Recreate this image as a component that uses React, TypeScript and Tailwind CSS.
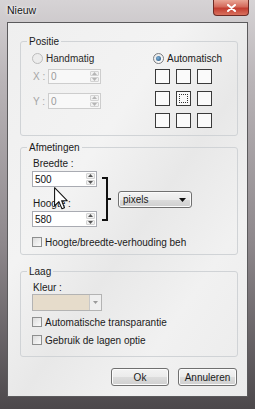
import React from "react";

const Arrow = ({ up, color = "#4d4d4d" }: { up?: boolean; color?: string }) => (
  <svg width="5" height="3" viewBox="0 0 5 3">
    <path d={up ? "M0 3 L2.5 0 L5 3 Z" : "M0 0 L2.5 3 L5 0 Z"} fill={color} />
  </svg>
);

const Spin = ({ value, disabled, w, h }: { value: string; disabled?: boolean; w: string; h: string }) => (
  <div
    className={`flex ${w} ${h} border ${
      disabled ? "border-[#cdcdcd] bg-[#f8f8f8] text-[#9b9b9b]" : "border-[#a9abb2] bg-white text-[#111]"
    }`}
  >
    <div className="flex flex-1 items-center pl-[2px]">{value}</div>
    <div className="flex w-[11px] flex-col gap-[1px] p-[1px]">
      <div className="flex flex-1 items-center justify-center rounded-[1px] border border-[#d3d3d3] bg-[#f1f1f1]">
        <Arrow up color={disabled ? "#b5b5b5" : "#555"} />
      </div>
      <div className="flex flex-1 items-center justify-center rounded-[1px] border border-[#d3d3d3] bg-[#f1f1f1]">
        <Arrow color={disabled ? "#b5b5b5" : "#555"} />
      </div>
    </div>
  </div>
);

const Radio = ({ checked, disabled, label }: { checked?: boolean; disabled?: boolean; label: string }) => (
  <div className="flex h-[11px] items-center gap-[3px]">
    <div
      className={`flex h-[11px] w-[11px] items-center justify-center rounded-full border ${
        disabled ? "border-[#bcbcbc] bg-[#ececec]" : "border-[#7b7d80] bg-[linear-gradient(135deg,#e6e6e6,#ffffff)]"
      }`}
    >
      {checked && (
        <div className="h-[5px] w-[5px] rounded-full bg-[radial-gradient(circle_at_40%_40%,#7fb3dc,#1e4b73)]" />
      )}
    </div>
    <span className={disabled ? "text-[#2a2a2a]" : "text-[#1a1a1a]"}>{label}</span>
  </div>
);

const Check = ({ label }: { label: string }) => (
  <div className="flex h-[10px] items-center gap-[3px] whitespace-nowrap">
    <div className="h-[10px] w-[10px] shrink-0 border border-[#8e8f8f] bg-[linear-gradient(135deg,#dcdcdc,#fbfbfb)]" />
    <span>{label}</span>
  </div>
);

const Group = ({ title, className, children }: { title: string; className: string; children: React.ReactNode }) => (
  <fieldset className={`rounded-[3px] border border-[#d0d3d6] ${className}`}>
    <legend className="ml-[6px] px-[2px] leading-[13px] text-[#1a1a1a]">{title}</legend>
    {children}
  </fieldset>
);

export default function App() {
  return (
    <div className="relative flex h-[409px] w-[255px] flex-col overflow-hidden bg-[linear-gradient(180deg,#d6d3d5_0%,#b9b4b7_20%,#8d878b_60%,#4c484b_100%)] font-['Liberation_Sans',Arial,sans-serif] text-[10px] text-[#1a1a1a]">
      {/* title bar */}
      <div className="flex h-[22px] shrink-0 items-start">
        <span className="pl-[7px] pt-[4px] text-[10.5px] leading-[13px] text-[#151515] [text-shadow:0_0_4px_#fff,0_0_2px_#fff]">
          Nieuw
        </span>
        <div className="ml-auto mr-[6px] flex h-[16px] w-[36px] items-center justify-center rounded-b-[4px] border border-t-0 border-[#6e2b25] bg-[linear-gradient(180deg,#e9a595_0%,#d46a5b_45%,#c23d30_55%,#d9705d_100%)]">
          <svg width="9" height="8" viewBox="0 0 9 8">
            <path d="M1 1 L8 7 M8 1 L1 7" stroke="#fff" strokeWidth="2" strokeLinecap="round" />
          </svg>
        </div>
      </div>

      {/* client area */}
      <div className="mx-[7px] mb-[12px] flex flex-1 flex-col border border-[#5b5a5c] bg-[linear-gradient(125deg,#efefef_0%,#f3f3f3_35%,#e8e8e8_55%,#f1f1f1_75%,#ebebeb_100%)] pl-[12px] pr-[9px]">
        <Group title="Positie" className="mt-[12px] pb-[7px]">
          <div className="flex pl-[11px] pt-[5px]">
            <div className="flex w-[121px] flex-col">
              <Radio disabled label="Handmatig" />
              <div className="mt-[5px] flex items-center">
                <span className="w-[16px] pl-[1px] text-[#a5a5a5]">X :</span>
                <Spin value="0" disabled w="w-[53px]" h="h-[15px]" />
              </div>
              <div className="mt-[9px] flex items-center">
                <span className="w-[16px] pl-[1px] text-[#a5a5a5]">Y :</span>
                <Spin value="0" disabled w="w-[53px]" h="h-[16px]" />
              </div>
            </div>
            <div className="flex flex-col">
              <Radio checked label="Automatisch" />
              <div className="ml-[2px] mt-[5px] grid w-fit grid-cols-3 gap-x-[6px] gap-y-[7px]">
                {Array.from({ length: 9 }).map((_, i) => (
                  <div
                    key={i}
                    className="flex h-[15px] w-[15px] items-center justify-center border-[1.5px] border-[#3a3a3a] bg-[#fafafa]"
                  >
                    {i === 4 && <div className="h-[9px] w-[9px] border border-dotted border-[#333]" />}
                  </div>
                ))}
              </div>
            </div>
          </div>
        </Group>

        <Group title="Afmetingen" className="mt-[5px] pb-[7px]">
          <div className="flex items-start pl-[11px] pt-[3px]">
            <div className="flex w-[65px] flex-col">
              <span className="pl-[1px] leading-[13px]">Breedte :</span>
              <div className="mt-[1px]">
                <Spin value="500" w="w-[65px]" h="h-[16px]" />
              </div>
              <span className="mt-[10px] pl-[1px] leading-[13px]">Hoogte :</span>
              <div className="mt-[1px]">
                <Spin value="580" w="w-[65px]" h="h-[16px]" />
              </div>
            </div>
            <svg className="ml-[5px] mt-[20px]" width="9" height="44" viewBox="0 0 9 44">
              <path d="M0 1 H5 V43 H0 M5 22 H9" fill="none" stroke="#111" strokeWidth="2" />
            </svg>
            <div className="ml-[7px] mt-[34px] flex h-[17px] w-[74px] items-center justify-between rounded-[3px] border border-[#707070] bg-[linear-gradient(180deg,#f3f3f3_0%,#ebebeb_50%,#dcdcdc_50%,#cfcfcf_100%)] pl-[4px] pr-[5px] shadow-[inset_0_0_0_1px_#fbfbfb]">
              <span>pixels</span>
              <svg width="7" height="4" viewBox="0 0 7 4">
                <path d="M0 0 H7 L3.5 4 Z" fill="#111" />
              </svg>
            </div>
          </div>
          <div className="mt-[10px] pl-[11px]">
            <Check label="Hoogte/breedte-verhouding beh" />
          </div>
        </Group>

        <Group title="Laag" className="mt-[10px] pb-[11px]">
          <div className="flex flex-col pl-[11px] pt-[3px]">
            <span className="pl-[1px] leading-[13px]">Kleur :</span>
            <div className="flex h-[17px] w-[70px] border border-[#b3b3b3] bg-[#e6dccb]">
              <div className="flex-1" />
              <div className="flex w-[12px] items-center justify-center border-l border-[#c8c8c8] bg-[#efefef]">
                <Arrow color="#9a9a9a" />
              </div>
            </div>
            <div className="mt-[6px]">
              <Check label="Automatische transparantie" />
            </div>
            <div className="mt-[8px]">
              <Check label="Gebruik de lagen optie" />
            </div>
          </div>
        </Group>

        <div className="mt-[11px] flex justify-end gap-[9px] pr-[1px]">
          <button className="flex h-[18px] w-[58px] items-center justify-center rounded-[3px] border border-[#707070] bg-[linear-gradient(180deg,#f3f3f3_0%,#ebebeb_50%,#dddddd_50%,#cfcfcf_100%)] shadow-[inset_0_0_0_1px_#fcfcfc]">
            Ok
          </button>
          <button className="flex h-[18px] w-[59px] items-center justify-center rounded-[3px] border border-[#707070] bg-[linear-gradient(180deg,#f3f3f3_0%,#ebebeb_50%,#dddddd_50%,#cfcfcf_100%)] shadow-[inset_0_0_0_1px_#fcfcfc]">
            Annuleren
          </button>
        </div>
      </div>

      {/* mouse pointer */}
      <svg className="absolute left-[54px] top-[187px]" width="14" height="23" viewBox="0 0 12 19.5">
        <path d="M0.5 0.5 L0.5 16 L4.2 12.4 L6.8 18.6 L9 17.7 L6.5 11.6 L11.3 11.6 Z" fill="#fff" stroke="#111" strokeWidth="0.9" strokeLinejoin="round" />
      </svg>
    </div>
  );
}
